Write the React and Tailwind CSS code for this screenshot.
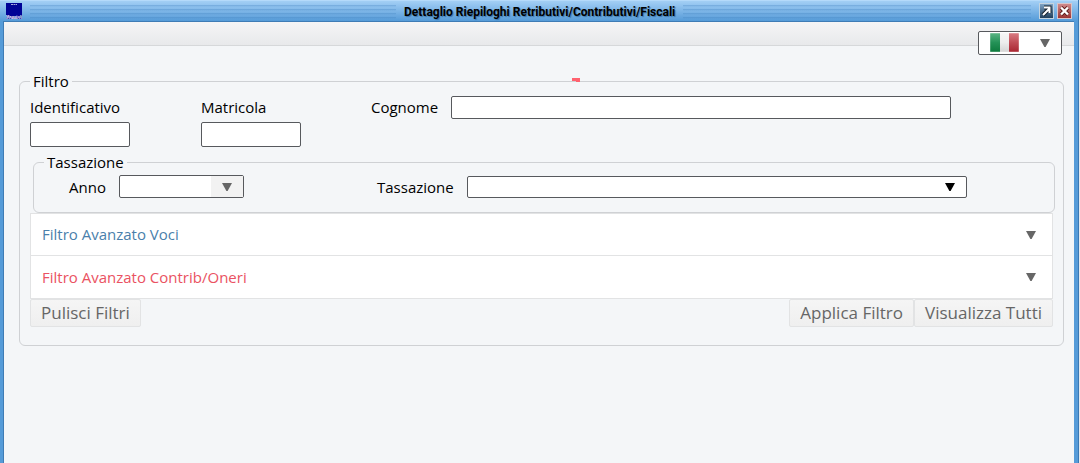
// App.jsx
import { useState } from "react";

function Arrow({ className }) {
  return (
    <svg viewBox="0 0 10 8" className={`h-2 w-2.5 ${className}`} aria-hidden="true">
      <path d="M0 0H10L5.6 8H4.4Z" fill="currentColor" />
    </svg>
  );
}

function Logo() {
  return (
    <svg viewBox="0 0 16 16" className="h-4 w-4 shrink-0" aria-hidden="true">
      <rect width="16" height="16" fill="#000396" />
      <path d="M5 1.5H11" stroke="#a9a9dd" strokeWidth="1" strokeDasharray="2 .5" />
      <path d="M0 15.5H16" stroke="#8f8fd0" strokeWidth="1" strokeDasharray="2 .5" />
      <text
        x="8"
        y="14.5"
        textAnchor="middle"
        fontSize="4"
        fontWeight="bold"
        fontFamily="Liberation Sans, sans-serif"
        fill="#fff"
      >
        Maggioli
      </text>
    </svg>
  );
}

function Flag() {
  return (
    <svg viewBox="0 0 29 20" className="h-5 w-[29px]" aria-hidden="true">
      <defs>
        <linearGradient id="green" x1="0" y1="0" x2="0" y2="1">
          <stop offset="0" stopColor="#5cb585" />
          <stop offset=".5" stopColor="#249257" />
          <stop offset="1" stopColor="#0d7a3d" />
        </linearGradient>
        <linearGradient id="white" x1="0" y1="0" x2="0" y2="1">
          <stop offset="0" stopColor="#f6f6f6" />
          <stop offset=".5" stopColor="#ededed" />
          <stop offset="1" stopColor="#d4d4d4" />
        </linearGradient>
        <linearGradient id="red" x1="0" y1="0" x2="0" y2="1">
          <stop offset="0" stopColor="#d97c83" />
          <stop offset=".5" stopColor="#c04c56" />
          <stop offset="1" stopColor="#a92632" />
        </linearGradient>
      </defs>
      <rect width="10" height="19" fill="url(#green)" />
      <rect x="10" width="9" height="19" fill="url(#white)" />
      <rect x="19" width="10" height="19" fill="url(#red)" />
      <path d="M0 .5H29M0 18.5H29M.5 0V19M28.5 0V19" stroke="#fff" strokeOpacity=".2" />
    </svg>
  );
}

function Stripes({ className }) {
  return (
    <div
      className={`h-4 bg-[repeating-linear-gradient(to_bottom,transparent_0px,transparent_2px,#3f7fbd4d_2px,#3f7fbd4d_3px,#3f7fbd1a_3px,#3f7fbd1a_4px)] ${className}`}
    />
  );
}

const panels = [
  { title: "Filtro Avanzato Voci", color: "text-[#4a7fab]" },
  { title: "Filtro Avanzato Contrib/Oneri", color: "text-[#ea5262]" },
];

const inputClass = "rounded-xs border border-[#57595d] bg-white px-2 outline-none";
const buttonClass =
  "h-7 rounded-xs border border-[#e2e3e4] bg-linear-to-b from-[#f5f5f5] to-[#efefef] px-2.5 text-[17px] leading-6 text-[#666]";

function App() {
  const [identificativo, setIdentificativo] = useState("");
  const [matricola, setMatricola] = useState("");
  const [cognome, setCognome] = useState("");

  const handleClear = () => {
    setIdentificativo("");
    setMatricola("");
    setCognome("");
  };

  return (
    <div className="bg-[#e3e8ee] pr-px font-['Open_Sans',sans-serif] text-[15px] text-black">
      <div className="flex min-h-screen flex-col border-r border-[#3b79b5] bg-[#559bd8]">
        <header className="flex h-[21px] items-center border-t border-[#b5dafa] bg-linear-to-b from-[#a3cff5] to-[#559bd8] px-1.5">
          <Logo />
          <div className="w-2" />
          <Stripes className="flex-20" />
          <h1 className="px-2 pt-px font-[Roboto,sans-serif] text-xs font-bold leading-4 [text-shadow:1px_1px_1px_#3a74a8]">
            Dettaglio Riepiloghi Retributivi/Contributivi/Fiscali
          </h1>
          <Stripes className="flex-19" />
          <div className="flex gap-[3px] pl-2">
            <button
              aria-label="Apri"
              className="h-4 w-[15px] border border-[#c5d4df] bg-linear-to-b from-[#7fa3c4] to-[#23415c]"
            >
              <svg viewBox="0 0 13 14" className="h-3.5 w-[13px]" aria-hidden="true">
                <path d="M3 11L9 5M4 3.5H9.5V9" fill="none" stroke="#17222c" strokeWidth="4" />
                <path d="M3 11L9 5M4 3.5H9.5V9" fill="none" stroke="#fff" strokeWidth="2" />
              </svg>
            </button>
            <button
              aria-label="Chiudi"
              className="h-4 w-[15px] border border-[#d8c5ca] bg-linear-to-b from-[#cf8a8c] to-[#9c3434]"
            >
              <svg viewBox="0 0 13 14" className="h-3.5 w-[13px]" aria-hidden="true">
                <path d="M3 3.5L10 10.5M10 3.5L3 10.5" stroke="#5c1b1b" strokeWidth="4" />
                <path d="M3 3.5L10 10.5M10 3.5L3 10.5" stroke="#fff" strokeWidth="2.4" />
              </svg>
            </button>
          </div>
        </header>

        <main className="ml-[3px] mr-1 flex-1 border-l border-t border-[#3f7cb5] bg-[#f4f6f8]">
          <div className="flex h-6 justify-end border-b border-[#d6d8da] bg-linear-to-b from-[#f5f5f6] to-[#e8e9eb] pr-3 pt-[9px]">
            <div className="relative h-6 w-[84px]">
              <select
                aria-label="Lingua"
                className={`${inputClass} h-6 w-full appearance-none`}
              >
                <option value="it"></option>
              </select>
              <div className="pointer-events-none absolute inset-0 flex items-center justify-between px-3">
                <Flag />
                <Arrow className="text-[#666]" />
              </div>
            </div>
          </div>

          <form onSubmit={(e) => e.preventDefault()} className="relative mx-[15px] mr-2.5 mt-6">
            <svg
              viewBox="0 0 8 4"
              shapeRendering="crispEdges"
              className="absolute left-1/2 top-2 ml-[30px] h-1 w-2"
              aria-hidden="true"
            >
              <path d="M0 0H8V4H4V3H0Z" fill="#ff626f" />
            </svg>
            <fieldset className="rounded-md border border-[#cfd1d4] px-2.5 pb-[18px]">
              <legend className="px-[3px] leading-[22px]">Filtro</legend>

              <div className="flex items-start pt-1">
                <div className="flex w-[171px] flex-col gap-1">
                  <label htmlFor="identificativo" className="leading-[22px]">
                    Identificativo
                  </label>
                  <input
                    id="identificativo"
                    value={identificativo}
                    onChange={(e) => setIdentificativo(e.target.value)}
                    className={`${inputClass} h-[25px] w-[100px]`}
                  />
                </div>
                <div className="flex w-[170px] flex-col gap-1">
                  <label htmlFor="matricola" className="leading-[22px]">
                    Matricola
                  </label>
                  <input
                    id="matricola"
                    value={matricola}
                    onChange={(e) => setMatricola(e.target.value)}
                    className={`${inputClass} h-[25px] w-[100px]`}
                  />
                </div>
                <label htmlFor="cognome" className="w-20 leading-[22px]">
                  Cognome
                </label>
                <input
                  id="cognome"
                  value={cognome}
                  onChange={(e) => setCognome(e.target.value)}
                  className={`${inputClass} h-[23px] w-[500px]`}
                />
              </div>

              <fieldset className="ml-[3px] -mr-0.5 mt-1 rounded-md border border-[#cfd1d4] px-2.5 pb-3.5">
                <legend className="px-[3px] leading-[22px]">Tassazione</legend>
                <div className="flex items-center pl-[25px] pt-0.5">
                  <label htmlFor="anno" className="w-[50px] leading-[22px]">
                    Anno
                  </label>
                  <div className="relative mr-[133px] flex">
                    <select
                      id="anno"
                      className={`${inputClass} h-[23px] w-[125px] appearance-none`}
                    >
                      <option></option>
                    </select>
                    <div className="pointer-events-none absolute inset-y-px right-px flex w-8 items-center justify-center bg-[#f2f2f2]">
                      <Arrow className="text-[#666]" />
                    </div>
                  </div>
                  <label htmlFor="tassazione" className="w-[90px] leading-[22px]">
                    Tassazione
                  </label>
                  <div className="relative flex">
                    <select
                      id="tassazione"
                      className={`${inputClass} h-[22px] w-[500px] appearance-none`}
                    >
                      <option></option>
                    </select>
                    <div className="pointer-events-none absolute inset-y-0 right-3 flex items-center">
                      <Arrow className="text-black" />
                    </div>
                  </div>
                </div>
              </fieldset>

              <div className="border border-[#e2e3e4] bg-white">
                {panels.map((panel) => (
                  <button
                    key={panel.title}
                    type="button"
                    className={`flex h-[42px] w-full items-center justify-between border-[#e2e3e4] pl-[11px] pr-4 not-last:border-b ${panel.color}`}
                  >
                    {panel.title}
                    <Arrow className="text-[#666]" />
                  </button>
                ))}
              </div>

              <div className="flex justify-between">
                <button type="button" onClick={handleClear} className={buttonClass}>
                  Pulisci Filtri
                </button>
                <div className="flex">
                  <button type="submit" className={buttonClass}>
                    Applica Filtro
                  </button>
                  <button type="button" className={buttonClass}>
                    Visualizza Tutti
                  </button>
                </div>
              </div>
            </fieldset>
          </form>
        </main>
      </div>
    </div>
  );
}

export default App;
